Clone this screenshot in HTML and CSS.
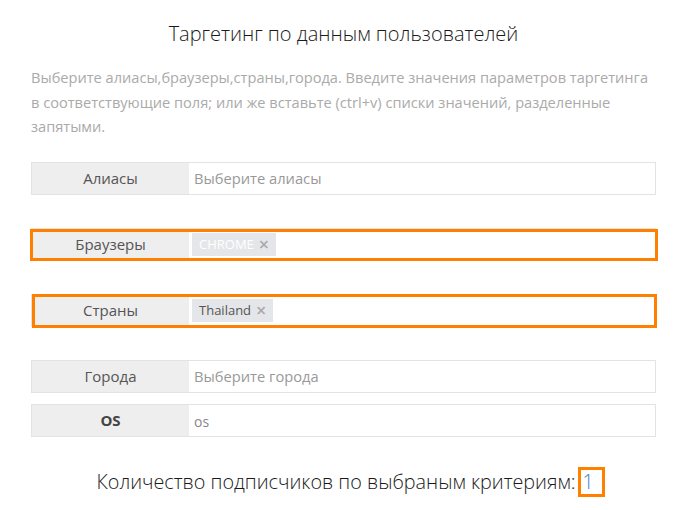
FILE: index.html
```html
<!DOCTYPE html>
<html lang="ru">
<head>
    <meta charset="UTF-8">
    <meta name="viewport" content="width=device-width, initial-scale=1.0">
    <title>Таргетинг по данным пользователей</title>
    <link rel="stylesheet" href="styles.css">
</head>
<body>
    <div class="targeting">
        <h3 class="targeting-title">Таргетинг по данным пользователей</h3>

        <p class="targeting-hint">Выберите алиасы,браузеры,страны,города. Введите значения параметров таргетинга в соответствующие поля; или же вставьте (ctrl+v) списки значений, разделенные запятыми.</p>

        <div class="field-group spaced">
            <div class="field-label">Алиасы</div>
            <div class="field-input placeholder">Выберите алиасы</div>
        </div>

        <div class="field-group spaced marked marked-a">
            <div class="field-label">Браузеры</div>
            <div class="field-input">
                <span class="tag tag-faded">CHROME <i class="tag-remove">×</i></span>
            </div>
        </div>

        <div class="field-group spaced marked marked-b">
            <div class="field-label">Страны</div>
            <div class="field-input">
                <span class="tag">Thailand <i class="tag-remove">×</i></span>
            </div>
        </div>

        <div class="field-group">
            <div class="field-label">Города</div>
            <div class="field-input placeholder">Выберите города</div>
        </div>

        <div class="field-group">
            <div class="field-label bold">OS</div>
            <div class="field-input value-small">os</div>
        </div>

        <div class="subscribers">
            Количество подписчиков по выбраным критериям:<span class="subscribers-count">1</span>
        </div>
    </div>
</body>
</html>
```

FILE: styles.css
```css
/* Таргетинг */
:root {
    --mark-orange: #ff8000;
    --field-border: #e3e3e3;
    --label-bg: #eeeeee;
}

body {
    margin: 0;
    background: #fff;
    font-family: 'Open Sans', 'Noto Sans', sans-serif;
    color: #222;
}

.targeting {
    width: 625px;
    margin-left: 31px;
    padding-top: 20px;
}

.targeting-title {
    margin: 0;
    font-size: 20px;
    font-weight: 300;
    line-height: 28px;
    text-align: center;
    color: #1a1a1a;
}

.targeting-hint {
    margin: 17px 0 0;
    font-size: 14.6px;
    font-weight: 400;
    line-height: 24.5px;
    color: #aaaaaa;
}

/* строки полей */
.field-group {
    display: flex;
    height: 33px;
    box-sizing: border-box;
    border: 1px solid var(--field-border);
    position: relative;
    margin-top: 11px;
}

.field-group.spaced {
    margin-bottom: 33px;
}

.targeting-hint + .field-group {
    margin-top: 23px;
}

.field-label {
    width: 157px;
    flex-shrink: 0;
    background: var(--label-bg);
    color: #555;
    font-size: 15px;
    display: flex;
    align-items: center;
    justify-content: center;
}

.field-label.bold {
    font-weight: 700;
    color: #444;
}

.field-input {
    flex: 1;
    display: flex;
    align-items: center;
    padding-left: 3px;
    font-size: 14.7px;
    color: #999;
}

.field-input.placeholder {
    padding-left: 5px;
}

.field-input.value-small {
    padding-left: 5px;
    font-size: 14px;
    color: #888;
    padding-top: 3px;
}

/* теги */
.tag {
    display: inline-flex;
    align-items: center;
    height: 23px;
    padding: 0 7px;
    background: #e4e6e9;
    font-size: 13px;
    color: #555;
}

.tag-faded {
    color: #fff;
}

.tag-remove {
    font-style: normal;
    font-size: 18px;
    font-weight: 600;
    color: #aaa;
    margin-left: 5px;
    line-height: 1;
}

/* пометки */
.marked::after {
    content: "";
    position: absolute;
    border: 3px solid var(--mark-orange);
    pointer-events: none;
}

.marked-a::after {
    top: 0;
    bottom: -1px;
    left: -2px;
    right: -3px;
}

.marked-b::after {
    top: -1px;
    bottom: -2px;
    left: 0;
    right: -2px;
}

/* итог */
.subscribers {
    margin-top: 30px;
    text-align: center;
    font-size: 19.8px;
    font-weight: 300;
    line-height: 30px;
    color: #1a1a1a;
    padding-left: 14px;
}

.subscribers-count {
    display: inline-block;
    box-sizing: border-box;
    height: 30px;
    width: 27px;
    margin-left: 2px;
    padding-left: 2px;
    line-height: 24px;
    vertical-align: top;
    text-align: left;
    border: 3px solid var(--mark-orange);
    color: #3a7fc1;
}
```
